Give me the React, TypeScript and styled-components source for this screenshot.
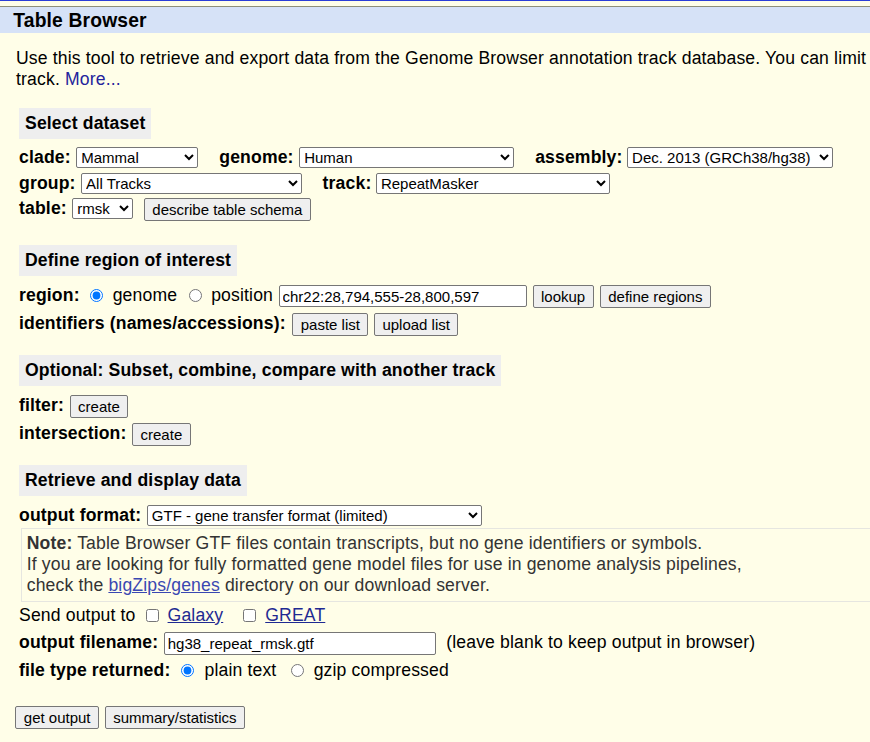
import React from "react";
import styled, { createGlobalStyle } from "styled-components";

const GlobalStyle = createGlobalStyle`
  html, body {
    margin: 0;
    padding: 0;
    overflow: hidden;
    background: #fffee8;
  }
  body {
    font-family: "Liberation Sans", Arial, sans-serif;
    font-size: 17.6px;
    color: #000;
  }
`;

const FONT = `"Liberation Sans", Arial, sans-serif`;

const Page = styled.div`
  width: 1200px;
  display: flex;
  flex-direction: column;
  align-items: flex-start;
  letter-spacing: 0.15px;
`;

const Banner = styled.header`
  align-self: stretch;
  border-top: 1px solid #2b3ed6;
  padding-top: 5px;
`;

const TitleBar = styled.h1`
  margin: 0;
  border-top: 1px solid #8f8f78;
  background: #d6e2f7;
  height: 26px;
  line-height: 28px;
  padding-left: 13.3px;
  font-size: 19.3px;
  font-weight: bold;
`;

const Intro = styled.div`
  margin: 14.5px 0 0 16px;
  line-height: 21px;
`;

const IntroLine = styled.span`
  display: block;
  white-space: nowrap;
`;

const MoreLink = styled.a`
  color: #24249c;
  text-decoration: none;
`;

const SectionHeader = styled.h2<{ $mt: number }>`
  margin: ${(p) => p.$mt}px 0 0 19px;
  padding: 5px 6px;
  background: #eeeeee;
  font-size: 17.6px;
  font-weight: bold;
  line-height: 21px;
  white-space: nowrap;
`;

const Row = styled.div<{ $mt: number; $ml?: number }>`
  display: flex;
  align-items: flex-start;
  margin: ${(p) => p.$mt}px 0 0 ${(p) => p.$ml ?? 19}px;
  white-space: nowrap;
`;

const Field = styled.span<{ $ml?: number; $gap?: number }>`
  display: inline-flex;
  align-items: flex-start;
  gap: ${(p) => p.$gap ?? 5.5}px;
  margin-left: ${(p) => p.$ml ?? 0}px;
`;

const Label = styled.span`
  font-weight: bold;
  line-height: 21px;
`;

const Text = styled.span<{ $ml?: number }>`
  line-height: 21px;
  margin-left: ${(p) => p.$ml ?? 0}px;
`;

const Select = styled.select<{ $w: number }>`
  width: ${(p) => p.$w}px;
  height: 21px;
  margin: 0;
  font-family: ${FONT};
  font-size: 15px;
  color: #000;
  background: #fff;
  border: 1px solid #767676;
  border-radius: 2px;
`;

const TextInput = styled.input<{ $w: number; $h: number; $ml?: number }>`
  box-sizing: border-box;
  width: ${(p) => p.$w}px;
  height: ${(p) => p.$h}px;
  margin: 0 0 0 ${(p) => p.$ml ?? 0}px;
  padding: 0 3px;
  font-family: ${FONT};
  font-size: 15px;
  color: #000;
  background: #fff;
  border: 1px solid #767676;
  border-radius: 2px;
`;

const Button = styled.button<{ $ml?: number }>`
  box-sizing: border-box;
  height: 23px;
  margin: 0 0 0 ${(p) => p.$ml ?? 0}px;
  padding: 0 7.5px;
  font-family: ${FONT};
  font-size: 15px;
  line-height: 17px;
  color: #000;
  background: #efefef;
  border: 1px solid #767676;
  border-radius: 2px;
  white-space: nowrap;
`;

const Toggle = styled.input<{ $ml?: number }>`
  width: 13px;
  height: 13px;
  flex: none;
  margin: 4px 0 0 ${(p) => p.$ml ?? 0}px;
  accent-color: #0075ff;
`;

const Link = styled.a<{ $ml?: number }>`
  color: #1f2a92;
  text-decoration: underline;
  line-height: 21px;
  margin-left: ${(p) => p.$ml ?? 0}px;
`;

const Note = styled.div`
  align-self: stretch;
  margin: 2px 0 0 20.7px;
  padding: 4px 5px 5px;
  border: 1px solid #e6e6e0;
  color: #333;
  line-height: 21px;
  white-space: nowrap;
`;

const NoteLink = styled.a`
  color: #3a48b2;
  text-decoration: underline;
`;

const ActionBar = styled.div`
  display: flex;
  gap: 5.6px;
  margin: 25.5px 0 0 15.3px;
`;

export default function App() {
  return (
    <>
      <GlobalStyle />
      <Page>
        <Banner>
          <TitleBar>Table Browser</TitleBar>
        </Banner>

        <Intro>
          <IntroLine>
            Use this tool to retrieve and export data from the Genome Browser annotation track database. You can limit
          </IntroLine>
          <IntroLine>
            track. <MoreLink href="#">More...</MoreLink>
          </IntroLine>
        </Intro>

        <SectionHeader $mt={18.5}>Select dataset</SectionHeader>
        <Row $mt={8}>
          <Field>
            <Label>clade:</Label>
            <Select $w={122} defaultValue="Mammal">
              <option>Mammal</option>
            </Select>
          </Field>
          <Field $ml={21}>
            <Label>genome:</Label>
            <Select $w={215} defaultValue="Human">
              <option>Human</option>
            </Select>
          </Field>
          <Field $ml={21} $gap={4.5}>
            <Label>assembly:</Label>
            <Select $w={206} defaultValue="hg38">
              <option value="hg38">Dec. 2013 (GRCh38/hg38)</option>
            </Select>
          </Field>
        </Row>
        <Row $mt={5}>
          <Field>
            <Label>group:</Label>
            <Select $w={221} defaultValue="All Tracks">
              <option>All Tracks</option>
            </Select>
          </Field>
          <Field $ml={20.5} $gap={4.5}>
            <Label>track:</Label>
            <Select $w={234} defaultValue="RepeatMasker">
              <option>RepeatMasker</option>
            </Select>
          </Field>
        </Row>
        <Row $mt={4}>
          <Field>
            <Label>table:</Label>
            <Select $w={61} defaultValue="rmsk">
              <option>rmsk</option>
            </Select>
          </Field>
          <Button $ml={10.5}>describe table schema</Button>
        </Row>

        <SectionHeader $mt={24}>Define region of interest</SectionHeader>
        <Row $mt={9}>
          <Label>region:</Label>
          <Toggle type="radio" name="region" defaultChecked $ml={10} />
          <Text $ml={10}>genome</Text>
          <Toggle type="radio" name="region" $ml={12} />
          <Text $ml={9}>position</Text>
          <TextInput $w={248} $h={22} $ml={5.5} defaultValue="chr22:28,794,555-28,800,597" />
          <Button $ml={6}>lookup</Button>
          <Button $ml={6}>define regions</Button>
        </Row>
        <Row $mt={5}>
          <Field $gap={6.5}>
            <Label>identifiers (names/accessions):</Label>
            <Button>paste list</Button>
          </Field>
          <Button $ml={5.5}>upload list</Button>
        </Row>

        <SectionHeader $mt={19}>Optional: Subset, combine, compare with another track</SectionHeader>
        <Row $mt={9}>
          <Field>
            <Label>filter:</Label>
            <Button>create</Button>
          </Field>
        </Row>
        <Row $mt={5}>
          <Field>
            <Label>intersection:</Label>
            <Button>create</Button>
          </Field>
        </Row>

        <SectionHeader $mt={19}>Retrieve and display data</SectionHeader>
        <Row $mt={9}>
          <Field>
            <Label>output format:</Label>
            <Select $w={335} defaultValue="gtf">
              <option value="gtf">GTF - gene transfer format (limited)</option>
            </Select>
          </Field>
        </Row>
        <Note>
          <b>Note:</b> Table Browser GTF files contain transcripts, but no gene identifiers or symbols.
          <br />
          If you are looking for fully formatted gene model files for use in genome analysis pipelines,
          <br />
          check the <NoteLink href="#">bigZips/genes</NoteLink> directory on our download server.
        </Note>
        <Row $mt={3}>
          <Text>Send output to</Text>
          <Toggle type="checkbox" $ml={10} />
          <Link href="#" $ml={9}>Galaxy</Link>
          <Toggle type="checkbox" $ml={20} />
          <Link href="#" $ml={9}>GREAT</Link>
        </Row>
        <Row $mt={5.5}>
          <Field>
            <Label>output filename:</Label>
            <TextInput $w={272} $h={23} defaultValue="hg38_repeat_rmsk.gtf" />
          </Field>
          <Text $ml={10.5}>(leave blank to keep output in browser)</Text>
        </Row>
        <Row $mt={5}>
          <Label>file type returned:</Label>
          <Toggle type="radio" name="ftype" defaultChecked $ml={11} />
          <Text $ml={10}>plain text</Text>
          <Toggle type="radio" name="ftype" $ml={15} />
          <Text $ml={9.3}>gzip compressed</Text>
        </Row>

        <ActionBar>
          <Button>get output</Button>
          <Button>summary/statistics</Button>
        </ActionBar>
      </Page>
    </>
  );
}
